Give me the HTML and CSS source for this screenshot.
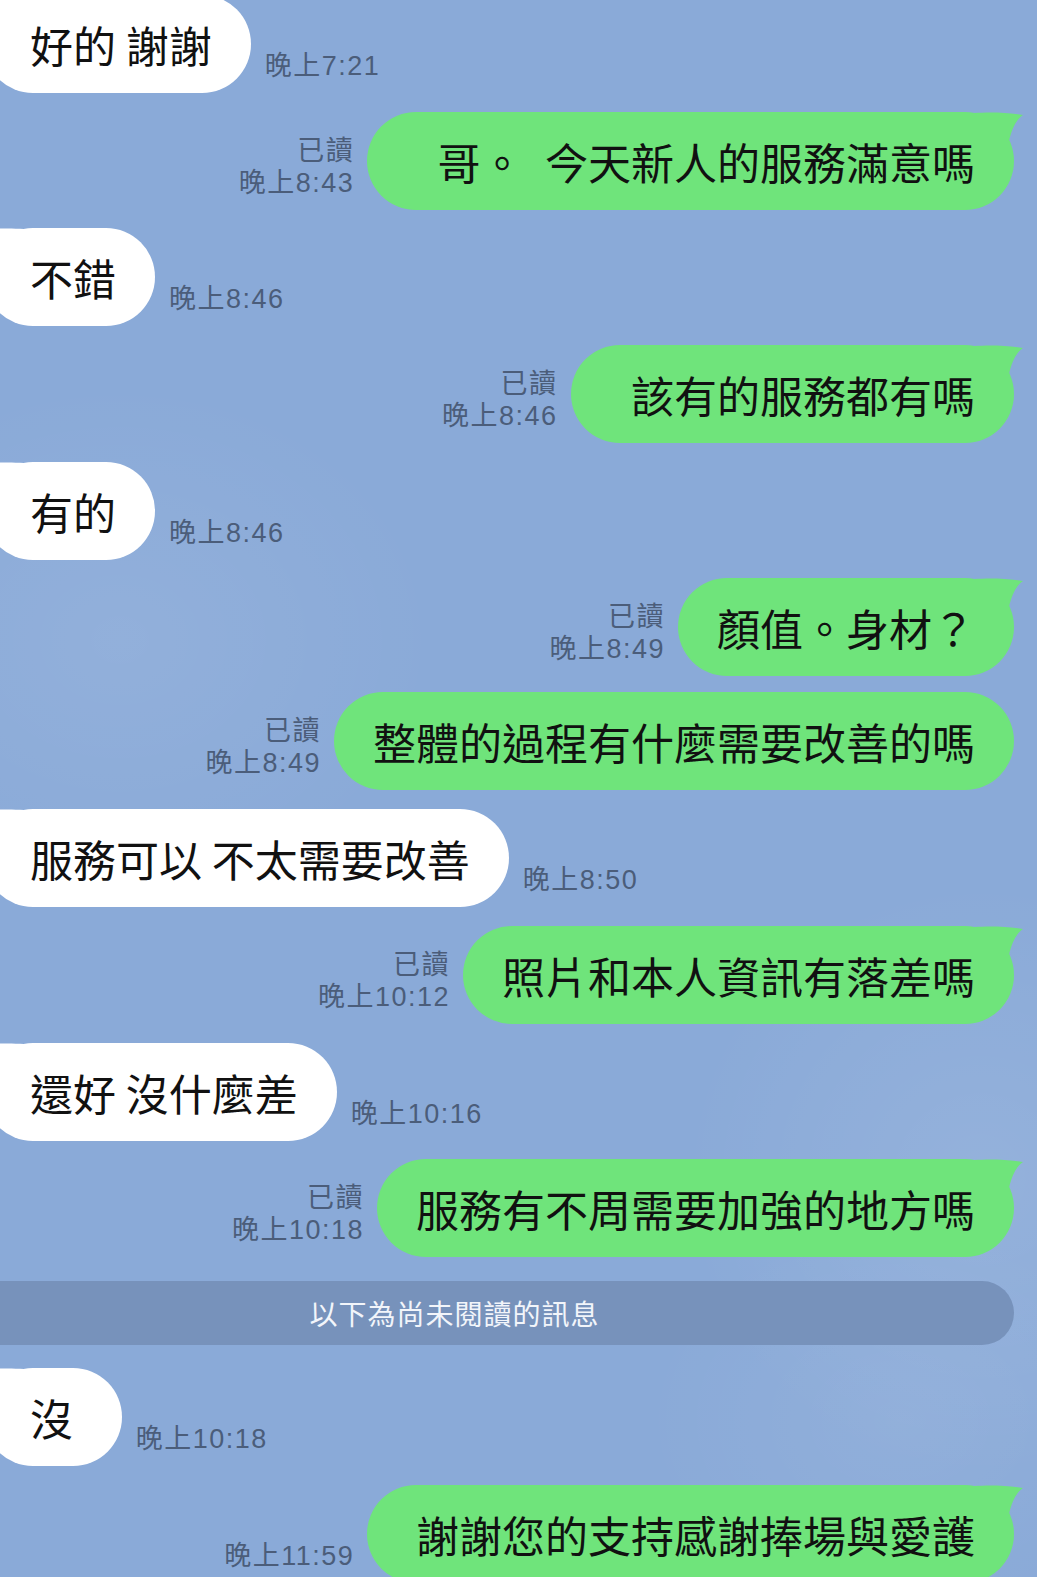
FILE: index.html
```html
<!DOCTYPE html>
<html lang="zh-Hant">
<head>
    <meta charset="UTF-8">
    <meta name="viewport" content="width=device-width, initial-scale=1.0">
    <title>聊天</title>
    <link rel="stylesheet" href="styles.css">
</head>
<body>
    <div class="chat">
        <div class="row in first">
            <div class="bubble">好的 謝謝<svg class="tail" viewBox="0 0 50 30"><path d="M0,1 C14,0 32,0 49,3 C42,8 38,16 35,29 L0,29 Z"/></svg></div>
            <div class="meta"><span>晚上7:21</span></div>
        </div>

        <div class="row out">
            <div class="meta"><span>已讀</span><span>晚上8:43</span></div>
            <div class="bubble">&ensp; 哥。&ensp;今天新人的服務滿意嗎<svg class="tail" viewBox="0 0 50 30"><path d="M0,1 C14,0 32,0 49,3 C42,8 38,16 35,29 L0,29 Z"/></svg></div>
        </div>

        <div class="row in">
            <div class="bubble">不錯<svg class="tail" viewBox="0 0 50 30"><path d="M0,1 C14,0 32,0 49,3 C42,8 38,16 35,29 L0,29 Z"/></svg></div>
            <div class="meta"><span>晚上8:46</span></div>
        </div>

        <div class="row out">
            <div class="meta"><span>已讀</span><span>晚上8:46</span></div>
            <div class="bubble">&ensp;該有的服務都有嗎<svg class="tail" viewBox="0 0 50 30"><path d="M0,1 C14,0 32,0 49,3 C42,8 38,16 35,29 L0,29 Z"/></svg></div>
        </div>

        <div class="row in">
            <div class="bubble">有的<svg class="tail" viewBox="0 0 50 30"><path d="M0,1 C14,0 32,0 49,3 C42,8 38,16 35,29 L0,29 Z"/></svg></div>
            <div class="meta"><span>晚上8:46</span></div>
        </div>

        <div class="row out tight">
            <div class="meta"><span>已讀</span><span>晚上8:49</span></div>
            <div class="bubble">顏值。身材？<svg class="tail" viewBox="0 0 50 30"><path d="M0,1 C14,0 32,0 49,3 C42,8 38,16 35,29 L0,29 Z"/></svg></div>
        </div>

        <div class="row out">
            <div class="meta"><span>已讀</span><span>晚上8:49</span></div>
            <div class="bubble">整體的過程有什麼需要改善的嗎</div>
        </div>

        <div class="row in">
            <div class="bubble">服務可以 不太需要改善<svg class="tail" viewBox="0 0 50 30"><path d="M0,1 C14,0 32,0 49,3 C42,8 38,16 35,29 L0,29 Z"/></svg></div>
            <div class="meta"><span>晚上8:50</span></div>
        </div>

        <div class="row out">
            <div class="meta"><span>已讀</span><span>晚上10:12</span></div>
            <div class="bubble">照片和本人資訊有落差嗎<svg class="tail" viewBox="0 0 50 30"><path d="M0,1 C14,0 32,0 49,3 C42,8 38,16 35,29 L0,29 Z"/></svg></div>
        </div>

        <div class="row in">
            <div class="bubble">還好 沒什麼差<svg class="tail" viewBox="0 0 50 30"><path d="M0,1 C14,0 32,0 49,3 C42,8 38,16 35,29 L0,29 Z"/></svg></div>
            <div class="meta"><span>晚上10:16</span></div>
        </div>

        <div class="row out last-before-divider">
            <div class="meta"><span>已讀</span><span>晚上10:18</span></div>
            <div class="bubble">服務有不周需要加強的地方嗎<svg class="tail" viewBox="0 0 50 30"><path d="M0,1 C14,0 32,0 49,3 C42,8 38,16 35,29 L0,29 Z"/></svg></div>
        </div>

        <div class="divider">以下為尚未閱讀的訊息</div>

        <div class="row in">
            <div class="bubble">沒 <svg class="tail" viewBox="0 0 50 30"><path d="M0,1 C14,0 32,0 49,3 C42,8 38,16 35,29 L0,29 Z"/></svg></div>
            <div class="meta"><span>晚上10:18</span></div>
        </div>

        <div class="row out">
            <div class="meta"><span>晚上11:59</span></div>
            <div class="bubble"> 謝謝您的支持感謝捧場與愛護<svg class="tail" viewBox="0 0 50 30"><path d="M0,1 C14,0 32,0 49,3 C42,8 38,16 35,29 L0,29 Z"/></svg></div>
        </div>
    </div>
</body>
</html>
```

FILE: styles.css
```css
/* Basic reset */
* {
    margin: 0;
    padding: 0;
    box-sizing: border-box;
}

/* Chat wallpaper */
body {
    font-family: "Noto Sans CJK TC", "Noto Sans", sans-serif;
    background-color: #8aaad8;
    background-image:
        radial-gradient(ellipse 320px 260px at 120px 640px, rgba(255, 255, 255, 0.07), transparent),
        radial-gradient(ellipse 300px 300px at 980px 1180px, rgba(255, 255, 255, 0.09), transparent),
        radial-gradient(ellipse 260px 200px at 900px 1420px, rgba(255, 255, 255, 0.06), transparent);
    overflow: hidden;
    height: 1577px;
}

/* Message list */
.chat {
    width: 1037px;
    padding-right: 23px;
}

.row {
    display: flex;
    align-items: flex-end;
    margin-bottom: 18.7px;
}

.row.first {
    margin-top: -5px;
}

.row.tight {
    margin-bottom: 16px;
}

.row.out {
    justify-content: flex-end;
}

.row.last-before-divider {
    margin-bottom: 24px;
}

/* Bubbles */
.bubble {
    position: relative;
    font-size: 43px;
    line-height: 58px;
    padding: 20px 39px;
    border-radius: 49px;
    color: #111;
    white-space: pre;
}

.in .bubble {
    background-color: #fff;
    margin-left: -16px;
    padding-left: 46px;
}

.out .bubble {
    background-color: #6fe47b;
}

.tail {
    position: absolute;
    top: 0;
    width: 50px;
    height: 30px;
}

.out .tail {
    right: -10px;
    fill: #6fe47b;
}

.in .tail {
    left: -10px;
    transform: scaleX(-1);
    fill: #fff;
}

/* Read mark and time */
.meta {
    display: flex;
    flex-direction: column;
    font-family: "Liberation Sans", "Noto Sans CJK TC", sans-serif;
    font-size: 27px;
    line-height: 32px;
    letter-spacing: 1.5px;
    color: #4b5d7a;
    margin: 0 13px 11px 14px;
    white-space: nowrap;
}

.out .meta {
    align-items: flex-end;
}

/* Unread separator */
.divider {
    height: 64px;
    margin: 0 0 23px -105px;
    border-radius: 32px;
    background-color: #7792bb;
    color: #f2f5fa;
    font-size: 28px;
    letter-spacing: 1px;
    display: flex;
    align-items: center;
    justify-content: center;
}
```
